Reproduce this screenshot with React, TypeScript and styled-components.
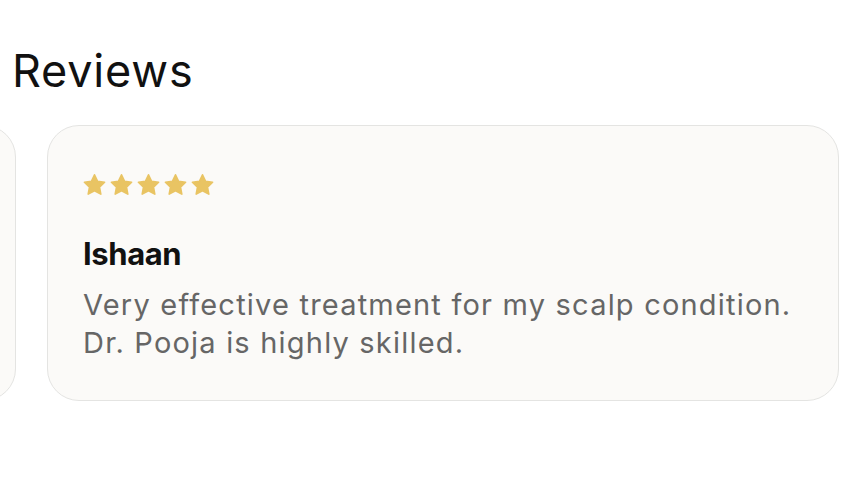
import React from 'react';
import styled, { createGlobalStyle } from 'styled-components';

const GlobalStyle = createGlobalStyle`
  html, body {
    margin: 0;
    padding: 0;
    background: #ffffff;
  }
  body {
    font-family: Inter, "Noto Sans", sans-serif;
    -webkit-font-smoothing: antialiased;
  }
`;

const Section = styled.section`
  width: 868px;
  height: 492px;
  overflow: hidden;
  padding-top: 47px;
  box-sizing: border-box;
`;

const Title = styled.h2`
  margin: 0 0 30px 12px;
  font-size: 45px;
  line-height: 48px;
  font-weight: 400;
  color: #111111;
  letter-spacing: 0.8px;
`;

const Viewport = styled.div`
  overflow: hidden;
  width: 100%;
`;

const Track = styled.div<{ $offset: number }>`
  display: flex;
  gap: 31px;
  transform: translateX(${(p) => p.$offset}px);
`;

const Card = styled.article`
  flex: 0 0 792px;
  height: 276px;
  box-sizing: border-box;
  padding: 47px 30px 0 35px;
  background: #fbfaf8;
  border: 1.5px solid #e4e4e2;
  border-radius: 32px;
`;

const Stars = styled.div`
  display: flex;
  gap: 2px;
  height: 24px;
  margin-left: -1px;
  margin-bottom: 39px;
`;

const Name = styled.h3`
  margin: 0 0 14px 0;
  font-size: 31px;
  line-height: 36px;
  font-weight: 700;
  color: #111111;
  letter-spacing: -0.4px;
`;

const Body = styled.p`
  margin: 0;
  font-size: 29px;
  line-height: 38px;
  color: #666666;
  letter-spacing: 1.2px;
`;

const Star = () => (
  <svg width="25" height="24" viewBox="0 0 24 24">
    <path
      d="M12 1.8l3.1 6.5 7 .9-5.1 4.9 1.3 7-6.3-3.4-6.3 3.4 1.3-7L1.9 9.2l7-.9z"
      fill="#e9c463"
      stroke="#e9c463"
      strokeWidth="1.6"
      strokeLinejoin="round"
    />
  </svg>
);

const review = {
  name: 'Ishaan',
  text: 'Very effective treatment for my scalp condition. Dr. Pooja is highly skilled.',
};

export default function App() {
  return (
    <>
      <GlobalStyle />
      <Section>
        <Title>Reviews</Title>
        <Viewport>
          <Track $offset={-776}>
            <Card aria-hidden />
            <Card>
              <Stars>
                {[0, 1, 2, 3, 4].map((i) => (
                  <Star key={i} />
                ))}
              </Stars>
              <Name>{review.name}</Name>
              <Body>{review.text}</Body>
            </Card>
            <Card aria-hidden />
          </Track>
        </Viewport>
      </Section>
    </>
  );
}
